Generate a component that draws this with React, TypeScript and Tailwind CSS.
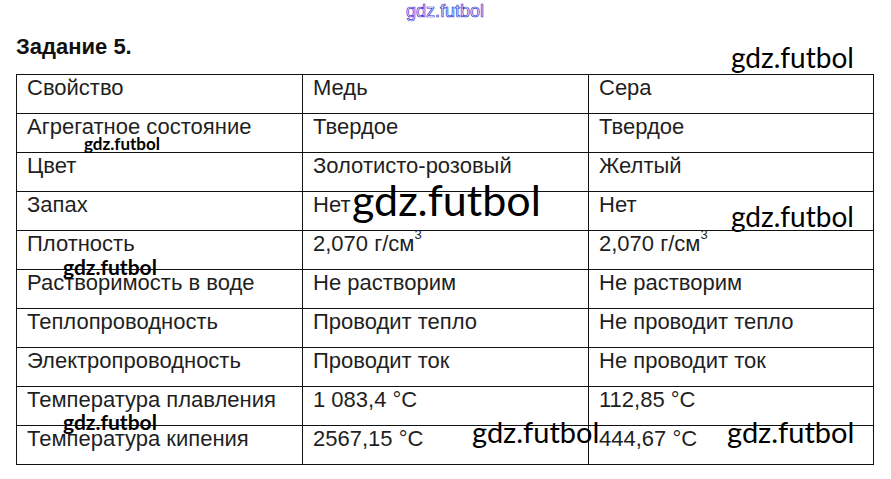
import React from 'react';

/* ── table data ── */

const Cube = () => <sup className="-top-[12px] text-[13px]">3</sup>;

const ROWS: [string, React.ReactNode, React.ReactNode][] = [
  ['Свойство', 'Медь', 'Сера'],
  ['Агрегатное состояние', 'Твердое', 'Твердое'],
  ['Цвет', 'Золотисто-розовый', 'Желтый'],
  ['Запах', 'Нет', 'Нет'],
  ['Плотность', <>2,070 г/см<Cube /></>, <>2,070 г/см<Cube /></>],
  ['Растворимость в воде', 'Не растворим', 'Не растворим'],
  ['Теплопроводность', 'Проводит тепло', 'Не проводит тепло'],
  ['Электропроводность', 'Проводит ток', 'Не проводит ток'],
  ['Температура плавления', '1 083,4 °C', '112,85 °C'],
  ['Температура кипения', '2567,15 °C', '444,67 °C'],
];

/* ── watermark overlays: [left, top, font-size] ── */

const MARKS: { x: number; y: number; size: string; bold?: boolean }[] = [
  { x: 731, y: 43, size: 'text-[28px]' },
  { x: 84, y: 135, size: 'text-[17px]', bold: true },
  { x: 352, y: 178, size: 'text-[43px]' },
  { x: 731, y: 202, size: 'text-[28px]' },
  { x: 63, y: 256, size: 'text-[21px]', bold: true },
  { x: 63, y: 411, size: 'text-[21px]', bold: true },
  { x: 472, y: 417, size: 'text-[29px]' },
  { x: 727, y: 417, size: 'text-[29px]' },
];

export default function App() {
  return (
    <div className="relative w-[891px] h-[479px] overflow-hidden bg-white text-[#1f1f1f] font-['Liberation_Sans',Arial,sans-serif]">
      <div className="flex flex-col pl-[16px] pt-[35px]">
        <h1 className="text-[22px] leading-[24px] font-bold text-[#111]">Задание 5.</h1>

        <table className="mt-[15px] w-[857px] border-collapse table-fixed">
          <colgroup>
            <col className="w-[286px]" />
            <col className="w-[286px]" />
            <col className="w-[285px]" />
          </colgroup>
          <tbody>
            {ROWS.map((r, i) => (
              <tr key={i} className="h-[39px]">
                {r.map((c, j) => (
                  <td
                    key={j}
                    className="border border-[#111] px-[10px] pt-[1px] align-top text-[22px] leading-[24px] whitespace-nowrap"
                  >
                    {c}
                  </td>
                ))}
              </tr>
            ))}
          </tbody>
        </table>
      </div>

      {/* ── top outlined site mark ── */}
      <div className="absolute left-[406px] top-[1px] text-[18px] leading-[20px] text-white [-webkit-text-stroke:0.7px_#2f2fd6]">
        gdz.futbol
      </div>

      {/* ── watermarks ── */}
      {MARKS.map((m, i) => (
        <div
          key={i}
          className={`absolute leading-none text-black font-['Lato','Open_Sans',sans-serif] ${m.size} ${m.bold ? 'font-bold' : 'font-normal'}`}
          style={{ left: m.x, top: m.y }}
        >
          gdz.futbol
        </div>
      ))}
    </div>
  );
}
